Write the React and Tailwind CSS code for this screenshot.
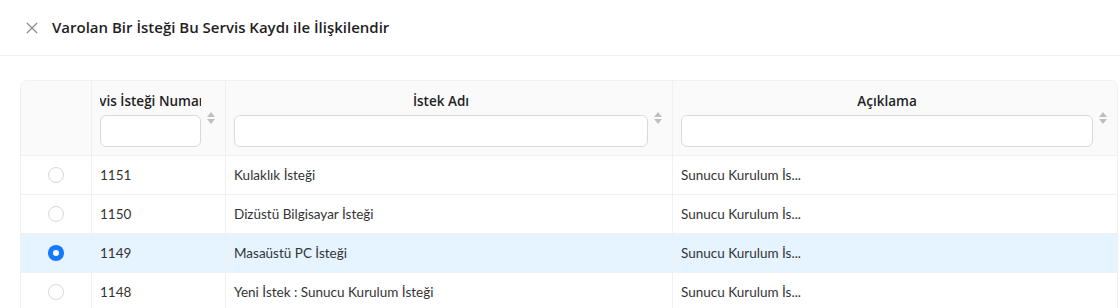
import React, { useState } from "react";

const rows = [
  { id: 1151, name: "Kulaklık İsteği", desc: "Sunucu Kurulum İs..." },
  { id: 1150, name: "Dizüstü Bilgisayar İsteği", desc: "Sunucu Kurulum İs..." },
  { id: 1149, name: "Masaüstü PC İsteği", desc: "Sunucu Kurulum İs..." },
  { id: 1148, name: "Yeni İstek : Sunucu Kurulum İsteği", desc: "Sunucu Kurulum İs..." },
];

const SortIcon = () => (
  <div className="ml-[6px] flex flex-col items-center gap-[2px] text-[#bfbfbf]">
    <svg width="8" height="5" viewBox="0 0 8 5" fill="currentColor">
      <path d="M4 0 L8 5 L0 5 Z" />
    </svg>
    <svg width="8" height="5" viewBox="0 0 8 5" fill="currentColor">
      <path d="M0 0 L8 0 L4 5 Z" />
    </svg>
  </div>
);

const HeaderCell = ({ title, last }) => (
  <div
    className={
      "flex items-center pl-[8px] pr-[10px] " +
      (last ? "" : "border-r border-[#f0f0f0]")
    }
  >
    <div className="flex min-w-0 flex-1 flex-col gap-[4px]">
      <div className="flex h-[22px] items-end justify-center overflow-hidden whitespace-nowrap text-[13.5px] font-semibold text-[#1f1f1f]">
        {title}
      </div>
      <input className="h-[32px] w-full rounded-[6px] border border-[#d9d9d9] bg-white px-[11px] outline-none" />
    </div>
    <SortIcon />
  </div>
);

const Radio = ({ checked }) =>
  checked ? (
    <span className="flex h-4 w-4 items-center justify-center rounded-full bg-[#1677ff]">
      <span className="h-[6px] w-[6px] rounded-full bg-white" />
    </span>
  ) : (
    <span className="h-4 w-4 rounded-full border border-[#d9d9d9] bg-white" />
  );

export default function App() {
  const [selected, setSelected] = useState(1149);

  return (
    <div
      className="h-[308px] w-[1120px] overflow-hidden bg-white text-[14px] text-[#262626]"
      style={{ fontFamily: '"Open Sans", sans-serif' }}
    >
      <div className="flex h-[56px] items-center border-b border-[#f0f0f0] pl-[26px]">
        <svg width="12" height="12" viewBox="0 0 12 12" className="text-[#8c8c8c]">
          <path d="M1 1 L11 11 M11 1 L1 11" stroke="currentColor" strokeWidth="1.3" />
        </svg>
        <span className="ml-[14px] text-[15px] font-semibold text-[#1f1f1f]">
          Varolan Bir İsteği Bu Servis Kaydı ile İlişkilendir
        </span>
      </div>

      <div className="pl-[20px] pr-[2px] pt-[24px]">
        <div className="overflow-hidden rounded-t-[8px] border-x border-t border-[#f0f0f0]">
          <div className="grid h-[75px] grid-cols-[71px_134px_447px_1fr] border-b border-[#f0f0f0] bg-[#fafafa]">
            <div className="border-r border-[#f0f0f0]" />
            <HeaderCell title="Servis İsteği Numarası" />
            <HeaderCell title="İstek Adı" />
            <HeaderCell title="Açıklama" last />
          </div>
          {rows.map((r) => (
            <div
              key={r.id}
              onClick={() => setSelected(r.id)}
              className={
                "grid h-[39px] grid-cols-[71px_134px_447px_1fr] border-b border-[#f0f0f0] text-[13.5px] text-[#333333] " +
                (selected === r.id ? "bg-[#e6f4ff]" : "bg-white")
              }
              style={{ fontFamily: 'Lato, "Open Sans", sans-serif' }}
            >
              <div className="flex items-center justify-center border-r border-[#f0f0f0]">
                <Radio checked={selected === r.id} />
              </div>
              <div className="flex items-center border-r border-[#f0f0f0] px-[8px]">{r.id}</div>
              <div className="flex items-center border-r border-[#f0f0f0] px-[8px]">{r.name}</div>
              <div className="flex items-center px-[8px]">{r.desc}</div>
            </div>
          ))}
        </div>
      </div>
    </div>
  );
}
